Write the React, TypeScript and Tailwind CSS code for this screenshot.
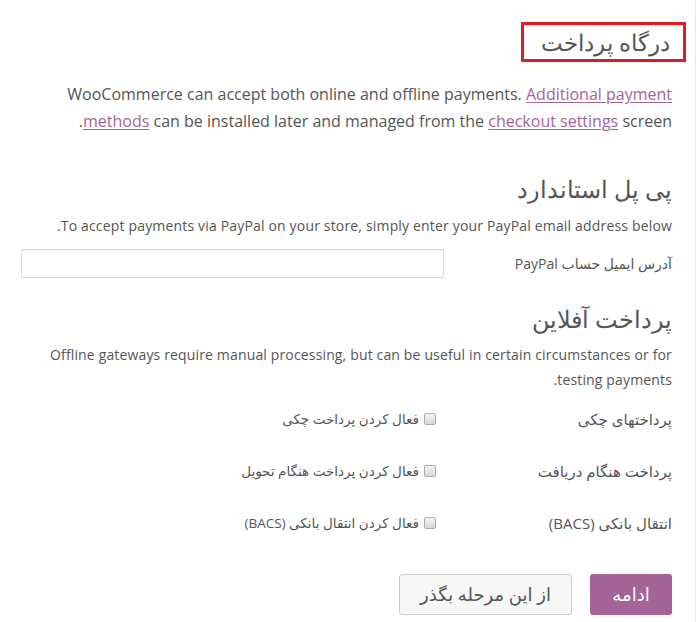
import { ReactNode } from "react";

const fa = { fontFamily: '"Open Sans", "DejaVu Sans", sans-serif' };

function GatewayRow({ label, toggle }: { label: string; toggle: string }) {
  return (
    <div className="flex items-center h-[52px]">
      <div className="w-[236px] shrink-0 text-[15px] text-[#555]">{label}</div>
      <label className="flex items-center gap-[5px] text-[13.5px] text-[#555]">
        <span className="w-[12px] h-[12px] rounded-[2px] border border-[#aaa] bg-gradient-to-b from-[#f3f3f3] to-[#d8d8d8]" />
        {toggle}
      </label>
    </div>
  );
}

function Link({ children }: { children: ReactNode }) {
  return <a className="text-[#a46497] underline underline-offset-2">{children}</a>;
}

export default function App() {
  return (
    <div style={fa} className="w-[699px] h-[622px] bg-white overflow-hidden">
      <div dir="rtl" className="w-[696px] h-full border-r border-[#e8e8e8] pr-[23px] pl-[21px] text-[#555]">
        {/* step title */}
        <div className="flex pt-[22px]">
          <h1 className="-mr-[14px] h-[40px] w-[165px] border-[3px] border-[#e01b24] flex items-center justify-center text-[23px] font-light text-[#555] pl-[4px]">
            درگاه پرداخت
          </h1>
        </div>

        <p className="mt-[19px] text-[16px] leading-[27px]">
          WooCommerce can accept both online and offline payments. <Link>Additional payment methods</Link> can be
          installed later and managed from the <Link>checkout settings</Link> screen.
        </p>

        {/* paypal */}
        <h2 className="mt-[38px] text-[24px] font-light leading-[32px]">پی پل استاندارد</h2>
        <p className="mt-[10px] text-[14px] leading-[22px] tracking-[0.17px]">
          To accept payments via PayPal on your store, simply enter your PayPal email address below.
        </p>
        <div className="mt-[12px] flex items-center">
          <label className="w-[228px] shrink-0 text-[14px]">آدرس ایمیل حساب PayPal</label>
          <input className="w-[423px] h-[29px] border border-[#ddd] shadow-[inset_0_1px_2px_rgba(0,0,0,0.07)] outline-none" />
        </div>

        {/* offline */}
        <h2 className="mt-[25px] text-[24px] font-light leading-[32px]">پرداخت آفلاین</h2>
        <p className="mt-[7px] text-[14px] leading-[25px] tracking-[0.15px]">
          Offline gateways require manual processing, but can be useful in certain circumstances or for testing
          payments.
        </p>

        <div className="mt-[1px]">
          <GatewayRow label="پرداختهای چکی" toggle="فعال کردن پرداخت چکی" />
          <GatewayRow label="پرداخت هنگام دریافت" toggle="فعال کردن پرداخت هنگام تحویل" />
          <GatewayRow label="انتقال بانکی (BACS)" toggle="فعال کردن انتقال بانکی (BACS)" />
        </div>

        <div className="mt-[25px] flex gap-[18px]">
          <button className="h-[41px] w-[82px] rounded-[3px] bg-[#a46497] text-white text-[18px]">ادامه</button>
          <button className="h-[41px] w-[173px] rounded-[3px] border border-[#ccc] bg-[#f7f7f7] text-[#555] text-[18px]">
            از این مرحله بگذر
          </button>
        </div>
      </div>
    </div>
  );
}
